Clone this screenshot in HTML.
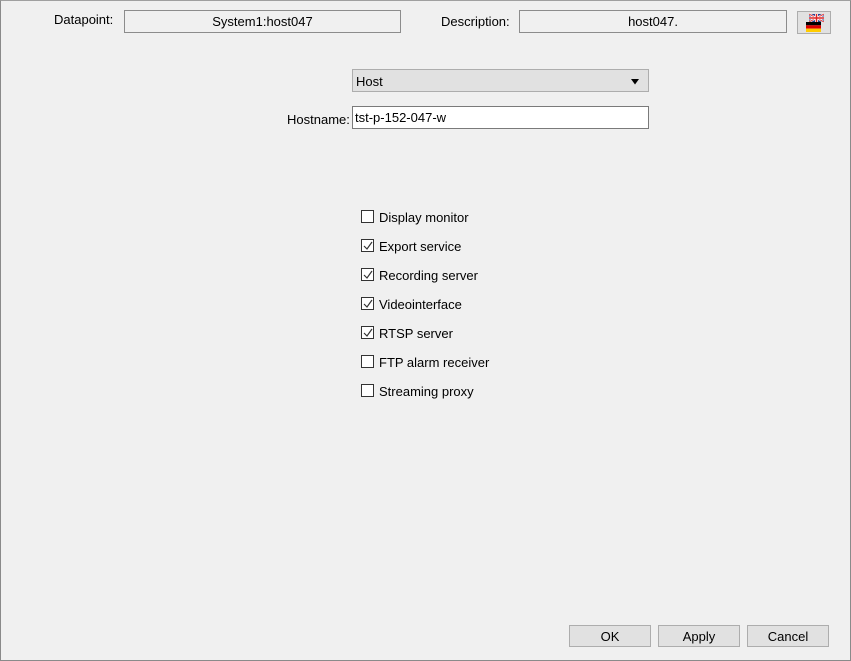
<!DOCTYPE html>
<html><head><style>
*{margin:0;padding:0;box-sizing:border-box}
body{width:851px;height:661px;background:#f0f0f0;font-family:"Liberation Sans",Arial,sans-serif;font-size:13px;color:#000;position:relative;overflow:hidden}
.frame{position:absolute;left:0;top:0;width:851px;height:661px;border:1px solid #8a8a8a;border-top-color:#a0a0a0}
.a{position:absolute;white-space:nowrap}
.box{position:absolute;border:1px solid #8c8c8c;background:#f0f0f0;text-align:center;line-height:22px}
.btn{position:absolute;border:1px solid #adadad;background:#e1e1e1;text-align:center;line-height:21px;font-size:13px}
.cb{position:absolute;left:361px;width:13px;height:13px;border:1px solid #333;background:#fff}
.cb svg{position:absolute;left:1px;top:1px}
.lbl{position:absolute;left:379px;font-size:13px}
</style></head><body>
<div class="frame"></div>
<div class="a" style="left:54px;top:12px">Datapoint:</div>
<div class="box" style="left:124px;top:10px;width:277px;height:23px">System1:host047</div>
<div class="a" style="left:441px;top:14px">Description:</div>
<div class="box" style="left:519px;top:10px;width:268px;height:23px">host047.</div>
<div class="btn" style="left:797px;top:11px;width:34px;height:23px">
<svg width="34" height="23" style="position:absolute;left:-1px;top:-1px">
<rect x="12" y="3" width="15" height="8" fill="#2a3f8f"/>
<path d="M12 3L27 11M27 3L12 11" stroke="#fff" stroke-width="2"/>
<path d="M12 3L27 11M27 3L12 11" stroke="#d22" stroke-width="0.8"/>
<path d="M19.5 3V11M12 7H27" stroke="#fff" stroke-width="3"/>
<path d="M19.5 3V11M12 7H27" stroke="#d22" stroke-width="1.5"/>
<rect x="9" y="11" width="15" height="3.3" fill="#000"/>
<rect x="9" y="14.3" width="15" height="3.3" fill="#d00"/>
<rect x="9" y="17.6" width="15" height="3.4" fill="#fc0"/>
</svg></div>
<div class="box" style="left:352px;top:69px;width:297px;height:23px;background:#e1e1e1;border-color:#adadad;text-align:left;padding-left:3px;line-height:23px">Host
<svg width="9" height="6" style="position:absolute;right:8px;top:9px"><path d="M0 0H8L4 5.5Z" fill="#000"/></svg></div>
<div class="a" style="left:287px;top:112px">Hostname:</div>
<div class="box" style="left:352px;top:106px;width:297px;height:23px;background:#fff;border-color:#7a7a7a;text-align:left;padding-left:2px">tst-p-152-047-w</div>

<div class="cb" style="top:210px"></div><div class="lbl" style="top:210px">Display monitor</div>
<div class="cb" style="top:239px"><svg width="10" height="10"><path d="M1 5L4 8L9 1" stroke="#333" stroke-width="1.2" fill="none"/></svg></div><div class="lbl" style="top:239px">Export service</div>
<div class="cb" style="top:268px"><svg width="10" height="10"><path d="M1 5L4 8L9 1" stroke="#333" stroke-width="1.2" fill="none"/></svg></div><div class="lbl" style="top:268px">Recording server</div>
<div class="cb" style="top:297px"><svg width="10" height="10"><path d="M1 5L4 8L9 1" stroke="#333" stroke-width="1.2" fill="none"/></svg></div><div class="lbl" style="top:297px">Videointerface</div>
<div class="cb" style="top:326px"><svg width="10" height="10"><path d="M1 5L4 8L9 1" stroke="#333" stroke-width="1.2" fill="none"/></svg></div><div class="lbl" style="top:326px">RTSP server</div>
<div class="cb" style="top:355px"></div><div class="lbl" style="top:355px">FTP alarm receiver</div>
<div class="cb" style="top:384px"></div><div class="lbl" style="top:384px">Streaming proxy</div>

<div class="btn" style="left:569px;top:625px;width:82px;height:22px">OK</div>
<div class="btn" style="left:658px;top:625px;width:82px;height:22px">Apply</div>
<div class="btn" style="left:747px;top:625px;width:82px;height:22px">Cancel</div>
</body></html>
